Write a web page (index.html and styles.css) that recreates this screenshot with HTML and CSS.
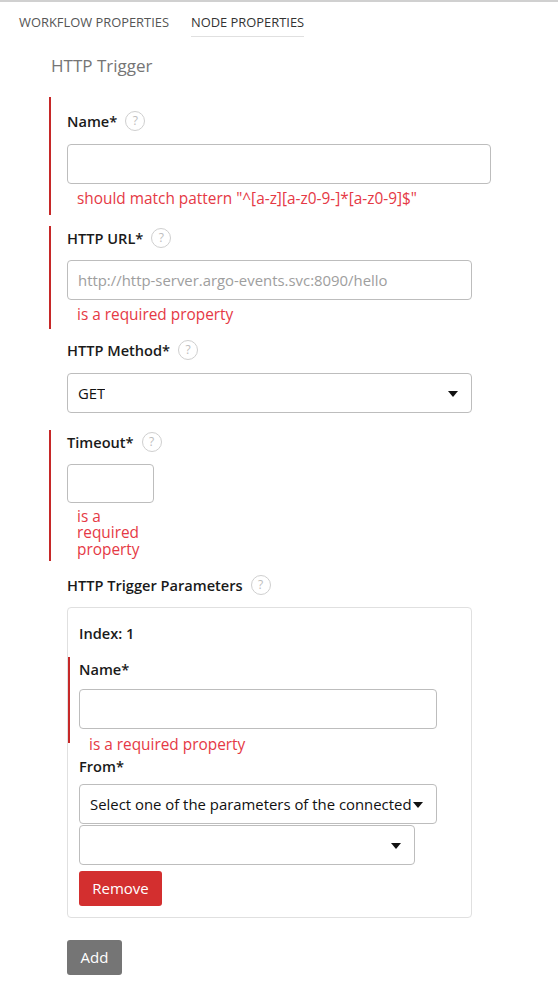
FILE: index.html
```html
<!DOCTYPE html>
<html>
<head>
<meta charset="utf-8">
<link rel="stylesheet" href="styles.css">
</head>
<body>
<div class="page">
  <nav class="tabs">
    <span class="tab">WORKFLOW PROPERTIES</span>
    <span class="tab active">NODE PROPERTIES</span>
  </nav>
  <div class="panel">
    <h2 class="title">HTTP Trigger</h2>

    <div class="field invalid f-name">
      <div class="label">Name*<span class="help">?</span></div>
      <div class="input w-name"></div>
      <div class="error">should match pattern "^[a-z][a-z0-9-]*[a-z0-9]$"</div>
    </div>

    <div class="field invalid f-url">
      <div class="label">HTTP URL*<span class="help">?</span></div>
      <div class="input w-std"><span class="placeholder">http://http-server.argo-events.svc:8090/hello</span></div>
      <div class="error">is a required property</div>
    </div>

    <div class="field f-method">
      <div class="label">HTTP Method*<span class="help">?</span></div>
      <div class="input select w-std"><span class="value">GET</span><span class="caret"></span></div>
    </div>

    <div class="field invalid f-timeout">
      <div class="label">Timeout*<span class="help">?</span></div>
      <div class="input w-small"></div>
      <div class="error narrow">is a required property</div>
    </div>

    <div class="field f-params">
      <div class="label">HTTP Trigger Parameters<span class="help">?</span></div>
      <div class="card w-std">
        <div class="label card-item index">Index: 1</div>
        <div class="field invalid inner-field">
          <div class="label">Name*</div>
          <div class="input w-inner"></div>
          <div class="error inner-error">is a required property</div>
        </div>
        <div class="card-item from">
          <div class="label">From*</div>
          <div class="input select w-inner sel1"><span class="value">Select one of the parameters of the connected</span><span class="caret"></span></div>
          <div class="input select w-inner2 sel2"><span class="value"></span><span class="caret"></span></div>
          <button class="btn btn-remove">Remove</button>
        </div>
      </div>
      <button class="btn btn-add">Add</button>
    </div>
  </div>
</div>
</body>
</html>
```

FILE: styles.css
```css
* { box-sizing: border-box; }
html, body { margin: 0; padding: 0; background: #fff; }
body {
  font-family: "Open Sans", "Noto Sans", sans-serif;
  color: #212121;
  font-size: 15px;
}
.page {
  border-top: 2px solid #d0d0d0;
  min-height: 997px;
}
.tabs {
  display: flex;
  gap: 22px;
  padding-left: 19px;
}
.tab {
  font-size: 12.9px;
  line-height: 20px;
  padding: 10px 0 4px;
  color: #555;
  border-bottom: 1px solid transparent;
}
.tab.active {
  color: #333;
  border-bottom-color: #e0e0e0;
}
.panel { padding-left: 49px; }
.title {
  margin: 17px 0 0 2px;
  font-size: 17px;
  line-height: 24px;
  font-weight: 400;
  color: #757575;
}
.field {
  border-left: 2px solid transparent;
  padding-left: 16px;
}
.field.invalid { border-left-color: #c62828; }
.label {
  font-weight: 600;
  font-size: 14.6px;
  line-height: 24px;
  display: flex;
  align-items: center;
  color: #1a1a1a;
}
.help {
  width: 20px;
  height: 20px;
  border: 1px solid #cfcfcf;
  border-radius: 50%;
  margin-left: 8px;
  display: inline-flex;
  align-items: center;
  justify-content: center;
  font-size: 12px;
  font-weight: 400;
  color: #bdbdbd;
}
.input {
  height: 40px;
  border: 1px solid #bdbdbd;
  border-radius: 4px;
  background: #fff;
  display: flex;
  align-items: center;
  padding: 0 10px;
  position: relative;
  font-size: 14.9px;
}
.w-name { width: 424px; }
.w-std { width: 405px; }
.w-small { width: 87px; height: 39px; }
.w-inner { width: 358px; }
.w-inner2 { width: 336px; }
.placeholder { color: #9e9e9e; white-space: nowrap; }
.value { color: #111; white-space: nowrap; overflow: hidden; }
.sel1 .value { margin-right: 12px; }
.caret {
  position: absolute;
  right: 13px;
  top: 50%;
  margin-top: -2px;
  width: 0;
  height: 0;
  border-left: 5px solid transparent;
  border-right: 5px solid transparent;
  border-top: 6px solid #111;
}
.error {
  color: #e53945;
  font-size: 15.4px;
  line-height: 20px;
  padding-left: 10px;
}
.narrow { width: 88px; line-height: 16.3px; }

.f-name { margin-top: 19px; padding-top: 12px; padding-bottom: 6px; }
.f-name .input { margin-top: 11px; }
.f-name .error { margin-top: 5px; }

.f-url { margin-top: 11px; padding-bottom: 4px; }
.f-url .input { margin-top: 10px; }
.f-url .error { margin-top: 5px; }

.f-method { margin-top: 9px; }
.f-method .input { margin-top: 11px; }

.f-timeout { margin-top: 17px; padding-bottom: 3px; }
.f-timeout .input { margin-top: 10px; }
.f-timeout .error { margin-top: 6px; }

.f-params { margin-top: 12px; }
.card {
  margin-top: 10px;
  border: 1px solid #e0e0e0;
  border-radius: 4px;
  padding: 13px 0 11px 0;
}
.card-item { padding-left: 11px; }
.inner-field {
  margin-top: 12px;
  padding-left: 9px;
  padding-bottom: 1px;
}
.inner-field .input { margin-top: 8px; }
.inner-error { margin-top: 6px; margin-bottom: -13px; }
.from { margin-top: 11px; }
.sel1 { margin-top: 6px; }
.sel2 { margin-top: 1px; }
.btn {
  display: block;
  border: none;
  border-radius: 3px;
  color: #fff;
  font-family: inherit;
  font-size: 15px;
  height: 35px;
  padding: 0 13px;
  cursor: pointer;
}
.btn-remove { background: #d32f2f; margin-top: 6px; width: 83px; }
.btn-add { background: #757575; margin-top: 22px; width: 55px; padding: 0; }
```
